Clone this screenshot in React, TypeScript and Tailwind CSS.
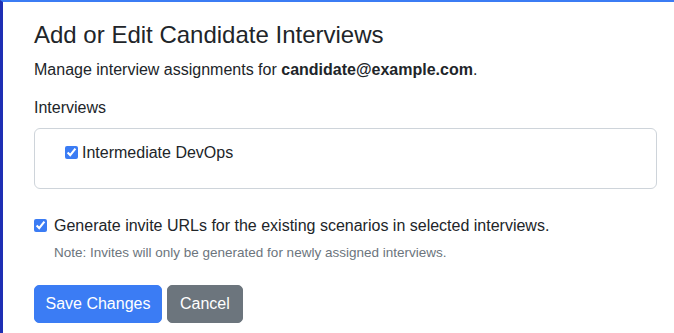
export default function App() {
  return (
    <div
      className="min-h-screen bg-white border-t-2 border-l-[3px] border-t-[#3b7cf4] border-l-[#1e2fb4] pl-[31px] pr-4 pt-[19px] text-[#212529]"
      style={{ fontFamily: '"Liberation Sans", Arial, sans-serif' }}
    >
      <h4 className="text-[24px] leading-[1.2] font-normal mb-[8px]">
        Add or Edit Candidate Interviews
      </h4>
      <p className="text-[16px] leading-6 mb-[14px]">
        Manage interview assignments for{" "}
        <strong className="font-bold">candidate@example.com</strong>.
      </p>

      <div className="mb-[8px]">
        <div className="text-[16px] leading-6 mb-[8px]">Interviews</div>
        <div className="w-[623px] h-[61px] border border-[#ced4da] rounded-[6px] pl-[30px] pt-[12px]">
          <label className="flex items-center gap-[4px] text-[16px] leading-6">
            <input
              type="checkbox"
              defaultChecked
              className="w-[13px] h-[13px] m-0 accent-[#3b7cf4]"
            />
            <span>Intermediate DevOps</span>
          </label>
        </div>
      </div>

      <div className="mt-[25px]">
        <label className="flex items-center gap-[7px] text-[16px] leading-6">
          <input
            type="checkbox"
            defaultChecked
            className="w-[13px] h-[13px] m-0 accent-[#3b7cf4]"
          />
          <span>Generate invite URLs for the existing scenarios in selected interviews.</span>
        </label>
        <p className="pl-[20px] mt-[5px] text-[13.5px] leading-5 text-[#6c757d]">
          Note: Invites will only be generated for newly assigned interviews.
        </p>
      </div>

      <div className="flex gap-[5px] mt-[22px]">
        <button className="h-[38px] px-[10.5px] rounded-[5px] bg-[#3b7cf4] border border-[#3b7cf4] text-white text-[16px]">
          Save Changes
        </button>
        <button className="h-[38px] px-[12px] rounded-[5px] bg-[#6c757d] border border-[#6c757d] text-white text-[16px]">
          Cancel
        </button>
      </div>
    </div>
  );
}
